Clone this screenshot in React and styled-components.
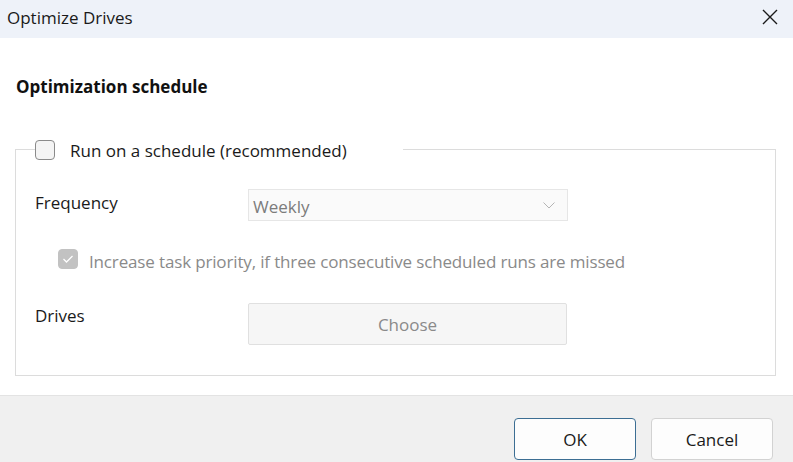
import React from "react";
import styled, { createGlobalStyle } from "styled-components";

const GlobalStyle = createGlobalStyle`
  html, body, #root { margin: 0; padding: 0; height: 100%; }
  body { font-family: "Open Sans", "Noto Sans", sans-serif; background: #ffffff; color: #1b1b1b; }
  * { box-sizing: border-box; }
`;

const Window = styled.div`
  height: 100vh;
  display: flex;
  flex-direction: column;
  overflow: hidden;
`;

const TitleBar = styled.div`
  height: 38px;
  flex: none;
  background: #eef2f9;
  display: flex;
  align-items: center;
  justify-content: space-between;
  padding: 0 14px 0 7px;
`;

const Title = styled.span`
  font-size: 17px;
  color: #1a1a1a;
  line-height: 24px;
  margin-top: -3px;
`;

const CloseButton = styled.button`
  border: 0;
  background: transparent;
  padding: 0;
  width: 18px;
  height: 18px;
  display: flex;
  align-items: center;
  justify-content: center;
  margin-top: -4px;
`;

const Main = styled.div`
  flex: 1;
  min-height: 0;
  padding: 37px 17px 0 15px;
  display: flex;
  flex-direction: column;
`;

const Heading = styled.h2`
  margin: 0 0 0 1px;
  font-size: 17px;
  font-weight: 700;
  line-height: 24px;
  color: #111;
`;

const Group = styled.fieldset`
  margin: 35px 0 0 0;
  padding: 0 19px 30px 19px;
  border: 1px solid #dcdcdc;
  min-width: 0;
`;

const Legend = styled.legend`
  padding: 6px 0 0 0;
  width: 368px;
  height: 30px;
  display: flex;
  align-items: flex-start;
  gap: 15px;
`;

const Box = styled.span`
  flex: none;
  width: 20px;
  height: 20px;
  border-radius: 4px;
  border: 1px solid ${p => (p.$checked ? "#c2c2c2" : "#8a8a8a")};
  background: ${p => (p.$checked ? "#c2c2c2" : "#f4f4f4")};
  display: flex;
  align-items: center;
  justify-content: center;
`;

const CheckLabel = styled.span`
  font-size: 17px;
  line-height: 24px;
  color: ${p => (p.$disabled ? "#8a8a8a" : "#1a1a1a")};
  letter-spacing: ${p => (p.$disabled ? "-0.15px" : "0")};
  white-space: nowrap;
  margin-top: ${p => (p.$disabled ? "1px" : "-1px")};
`;

const Grid = styled.div`
  display: grid;
  grid-template-columns: 213px 320px;
  padding-top: 25px;
`;

const FieldLabel = styled.span`
  font-size: 17px;
  line-height: 24px;
  color: #1a1a1a;
  padding-top: 2px;
  margin-top: ${p => p.$offset || "0px"};
`;

const Combo = styled.div`
  height: 32px;
  border: 1px solid #e6e6e6;
  background: #fafafa;
  display: flex;
  align-items: center;
  justify-content: space-between;
  padding: 0 12px 0 4px;
  font-size: 17px;
  color: #7c7c7c;
`;

const ComboText = styled.span`
  line-height: 24px;
  margin-top: 3px;
`;

const CheckRow = styled.div`
  grid-column: 1 / span 2;
  display: flex;
  align-items: flex-start;
  gap: 11px;
  margin: 28px 0 29px 23px;
`;

const ChooseButton = styled.button`
  height: 42px;
  width: 319px;
  border: 1px solid #e0e0e0;
  border-radius: 2px;
  background: #f6f6f6;
  font-family: inherit;
  font-size: 17px;
  color: #8a8a8a;
  padding: 0;
`;

const Footer = styled.div`
  height: 67px;
  flex: none;
  background: #f0f0f0;
  border-top: 1px solid #e3e3e3;
  display: flex;
  justify-content: flex-end;
  align-items: flex-start;
  gap: 15px;
  padding: 22px 20px 0 0;
`;

const DialogButton = styled.button`
  width: 122px;
  height: 42px;
  border-radius: 4px;
  border: 1px solid ${p => (p.$primary ? "#3c6e93" : "#d2d2d2")};
  background: #fdfdfd;
  font-family: inherit;
  font-size: 17px;
  color: #1a1a1a;
  padding: 0;
`;

export default function App() {
  return (
    <Window>
      <GlobalStyle />
      <TitleBar>
        <Title>Optimize Drives</Title>
        <CloseButton aria-label="Close">
          <svg width="16" height="16" viewBox="0 0 16 16">
            <path d="M1 1 L15 15 M15 1 L1 15" stroke="#1a1a1a" strokeWidth="1.4" fill="none" />
          </svg>
        </CloseButton>
      </TitleBar>
      <Main>
        <Heading>Optimization schedule</Heading>
        <Group>
          <Legend>
            <Box />
            <CheckLabel>Run on a schedule (recommended)</CheckLabel>
          </Legend>
          <Grid>
            <FieldLabel>Frequency</FieldLabel>
            <Combo>
              <ComboText>Weekly</ComboText>
              <svg width="12" height="7" viewBox="0 0 12 7">
                <path d="M0.5 0.5 L6 6 L11.5 0.5" stroke="#b4b4b4" strokeWidth="1" fill="none" />
              </svg>
            </Combo>
            <CheckRow>
              <Box $checked>
                <svg width="12" height="10" viewBox="0 0 12 10">
                  <path d="M1.5 5 L4.5 8 L10.5 2" stroke="#ffffff" strokeWidth="1.3" fill="none" />
                </svg>
              </Box>
              <CheckLabel $disabled>
                Increase task priority, if three consecutive scheduled runs are missed
              </CheckLabel>
            </CheckRow>
            <FieldLabel $offset="-1px">Drives</FieldLabel>
            <ChooseButton disabled>Choose</ChooseButton>
          </Grid>
        </Group>
      </Main>
      <Footer>
        <DialogButton $primary>OK</DialogButton>
        <DialogButton>Cancel</DialogButton>
      </Footer>
    </Window>
  );
}
